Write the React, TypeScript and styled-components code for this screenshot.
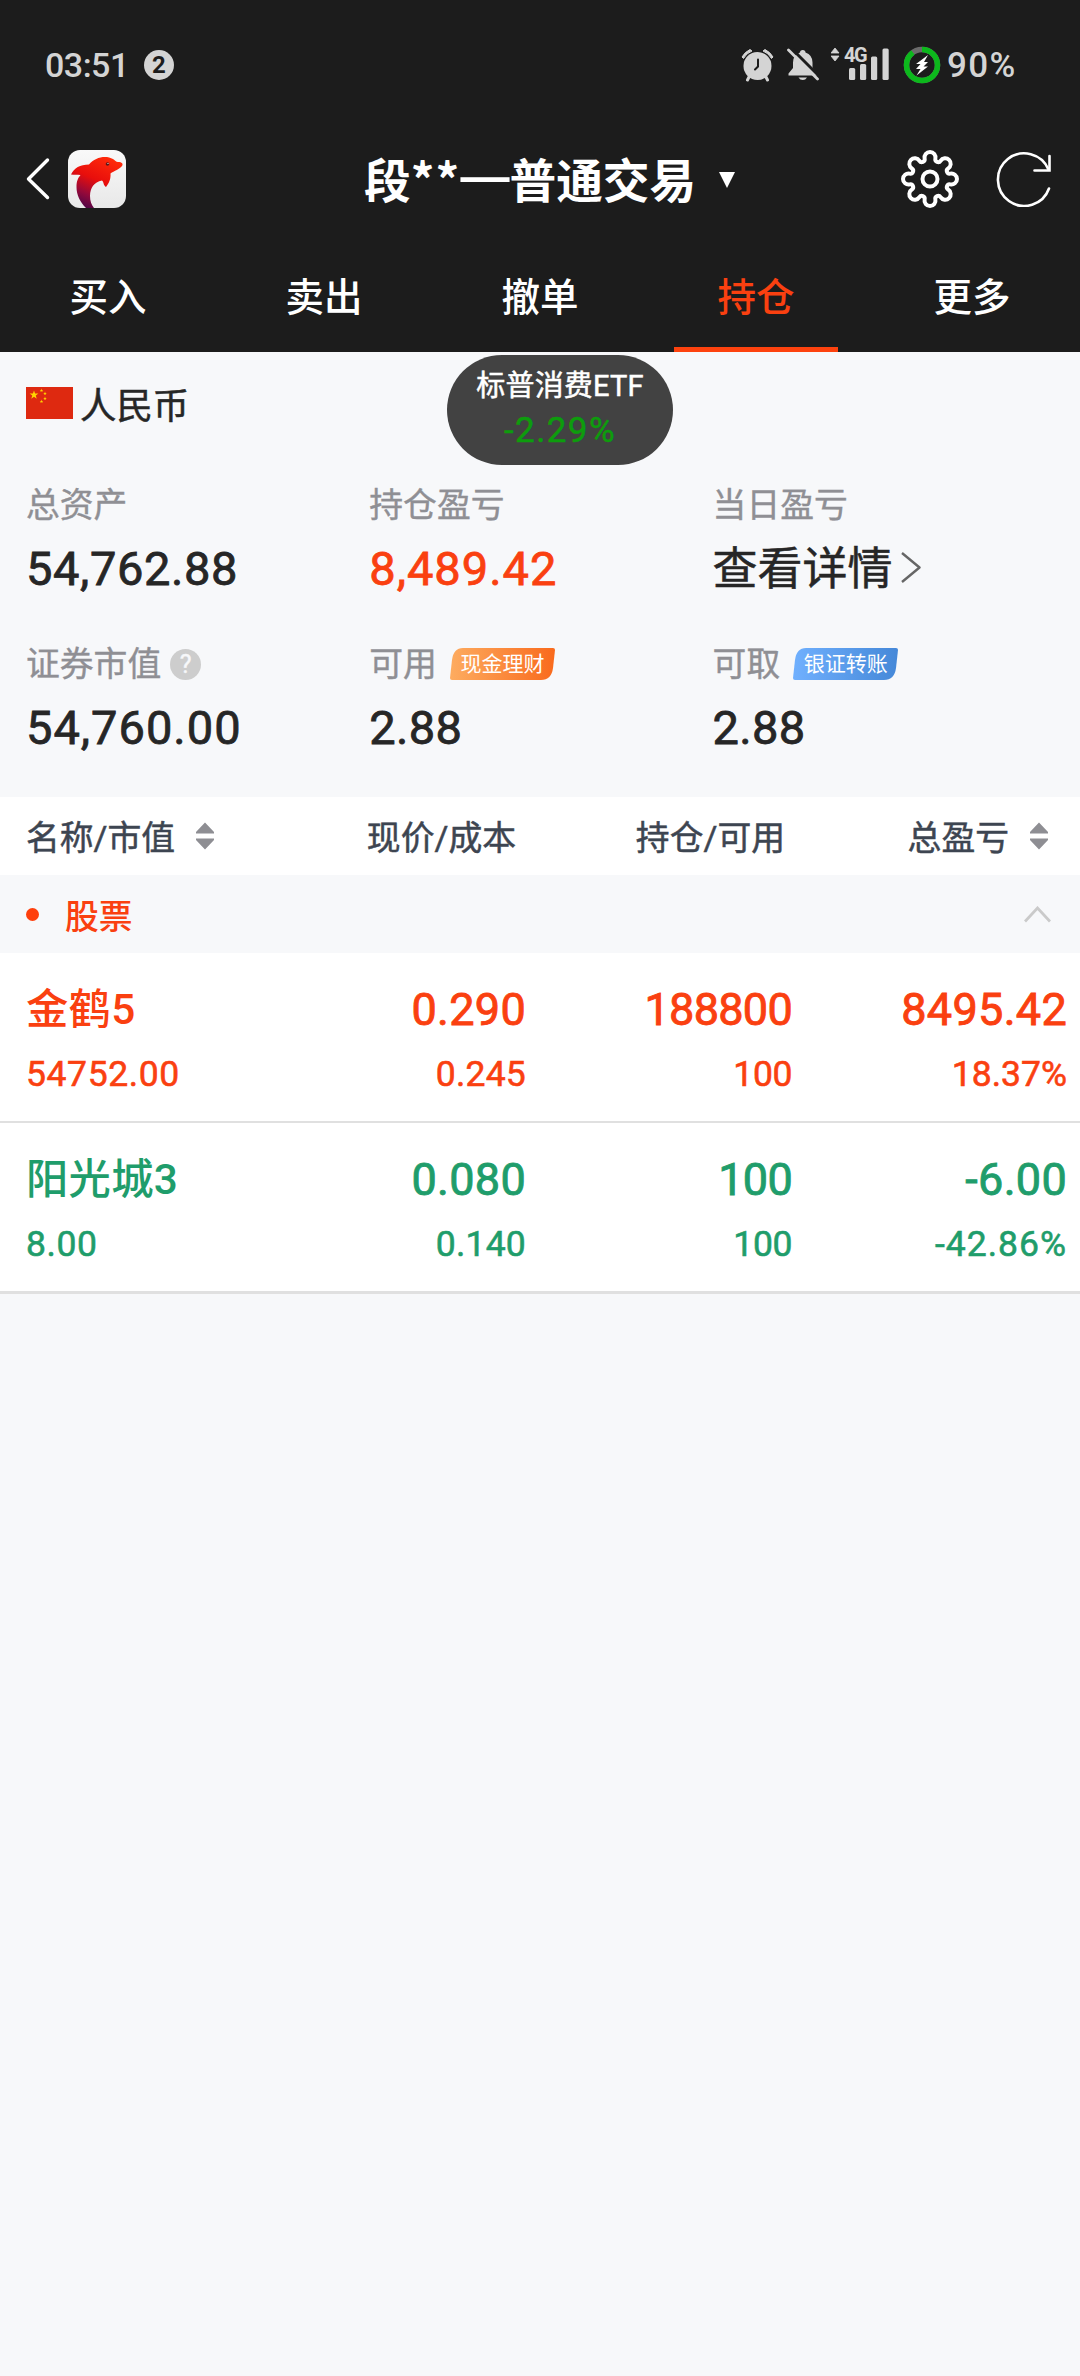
import React from "react";
import styled, { createGlobalStyle } from "styled-components";

const ORANGE = "#fa4010";
const GREEN = "#1f9d6b";

const GlobalStyle = createGlobalStyle`
  * { box-sizing: border-box; }
  html, body { margin: 0; padding: 0; background: #f7f8fa; }
  body { font-family: Roboto, "Noto Sans CJK SC", sans-serif; font-weight: 500; color: #262626; }
  svg { display: block; flex: none; }
`;

const Screen = styled.main`
  width: 1080px;
  height: 2376px;
  background: #f7f8fa;
  overflow: hidden;
`;

const TopArea = styled.header`
  height: 352px;
  background: #1c1c1c;
  color: #fff;
  display: flex;
  flex-direction: column;
`;

const StatusBar = styled.div`
  height: 130px;
  padding: 0 62px 0 45px;
  display: flex;
  align-items: center;
  color: #d4d4d4;
`;

const Clock = styled.span`
  font-size: 34px;
  line-height: 40px;
  letter-spacing: -0.5px;
  width: 99px;
`;

const Count = styled.span`
  width: 30px;
  height: 30px;
  border-radius: 50%;
  background: #d4d4d4;
  color: #1c1c1c;
  font-size: 24px;
  font-weight: 700;
  line-height: 31px;
  text-align: center;
`;

const StatusIcons = styled.div`
  margin-left: auto;
  display: flex;
  align-items: center;
`;

const Signal = styled.div`
  position: relative;
  width: 58px;
  height: 36px;
  margin-left: 12px;
`;

const NetType = styled.span`
  position: absolute;
  left: 13px;
  top: -2px;
  font-size: 20px;
  line-height: 20px;
  font-weight: 700;
  letter-spacing: -1.5px;
`;

const Battery = styled.span`
  margin-left: 6px;
  padding-top: 2px;
  font-size: 35px;
  line-height: 40px;
  width: 71px;
  letter-spacing: 1.4px;
`;

const TitleBar = styled.div`
  height: 98px;
  padding: 0 28px 0 25px;
  display: grid;
  grid-template-columns: 240px 1fr 240px;
  align-items: center;
`;

const BarSide = styled.div<{ $end?: boolean }>`
  display: flex;
  align-items: center;
  justify-content: ${(p) => (p.$end ? "flex-end" : "flex-start")};
  gap: ${(p) => (p.$end ? "37px" : "17px")};
`;

const Title = styled.h1`
  margin: -2px 0 0 99px;
  font-family: "Noto Sans CJK SC", sans-serif;
  font-size: 46.7px;
  line-height: 60px;
  font-weight: 700;
  display: flex;
  align-items: center;
  white-space: nowrap;
`;

const Stars = styled.span`
  letter-spacing: 1.2px;
`;

const Dash = styled.span`
  font-family: "Liberation Sans", sans-serif;
  font-size: 49px;
  line-height: 1;
  vertical-align: 5px;
`;

const Caret = styled.span`
  margin: 4px 0 0 23px;
  border: 8px solid transparent;
  border-top: 16px solid #fff;
  border-bottom: 0;
`;

const Tabs = styled.nav`
  flex: 1;
  display: grid;
  grid-template-columns: repeat(5, 1fr);
`;

const Tab = styled.div<{ $active?: boolean }>`
  display: flex;
  justify-content: center;
  padding-top: 40px;
  font-size: 38.5px;
  line-height: 60px;
  color: ${(p) => (p.$active ? ORANGE : "#fff")};
  span {
    width: 164px;
    text-align: center;
    border-bottom: ${(p) => (p.$active ? "5px solid #fd420e" : "0")};
  }
`;

const Summary = styled.section`
  position: relative;
  height: 445px;
  padding: 21px 26px 0;
`;

const Currency = styled.div`
  height: 60px;
  display: flex;
  align-items: center;
  gap: 7px;
  font-size: 36.4px;
  line-height: 60px;
  font-weight: 400;
  -webkit-text-stroke: 0.5px currentColor;
`;

const CurrencyName = styled.span`
  padding-top: 7px;
`;

const Ticker = styled.div`
  position: absolute;
  left: 447px;
  top: 3px;
  width: 226px;
  height: 110px;
  border-radius: 55px;
  background: #424242;
  color: #fff;
  text-align: center;
  padding-top: 8px;
`;

const TickerName = styled.div`
  font-size: 29px;
  line-height: 46px;
  font-weight: 400;
  -webkit-text-stroke: 0.5px currentColor;
  letter-spacing: 0.2px;
`;

const TickerChange = styled.div`
  font-size: 35px;
  line-height: 44px;
  color: #0d9c0d;
  font-weight: 400;
  letter-spacing: 1.4px;
  -webkit-text-stroke: 0.5px currentColor;
`;

const Metrics = styled.div`
  display: grid;
  grid-template-columns: repeat(3, 343.3px);
  grid-auto-rows: 159px;
  padding-top: 42px;
`;

const MetricLabel = styled.div`
  height: 60px;
  display: flex;
  align-items: center;
  font-size: 33.8px;
  color: #8f8f94;
  font-weight: 400;
  -webkit-text-stroke: 0.4px currentColor;
`;

const LabelText = styled.span`
  padding-bottom: 5px;
`;

const MetricValue = styled.div<{ $color?: string; $cjk?: boolean; $track?: number }>`
  height: 60px;
  margin-top: 4px;
  padding-bottom: ${(p) => (p.$cjk ? 0 : 2)}px;
  display: flex;
  align-items: center;
  font-size: ${(p) => (p.$cjk ? "45px" : "47px")};
  letter-spacing: ${(p) => p.$track || 0}px;
  color: ${(p) => p.$color || "#262626"};
  font-weight: 400;
  -webkit-text-stroke: ${(p) => (p.$cjk ? 0.5 : 0.8)}px currentColor;
`;

const ValueText = styled.span`
  padding-bottom: 8px;
`;

const BadgeBox = styled.span`
  position: relative;
  width: 105px;
  height: 32px;
  margin-left: 13px;
`;

const BadgeText = styled.span`
  position: absolute;
  inset: 0;
  font-size: 21px;
  line-height: 33px;
  text-align: center;
  color: #fff;
  -webkit-text-stroke: 0;
`;

const Help = styled.span`
  width: 31px;
  height: 31px;
  margin-left: 9px;
  border-radius: 50%;
  background: #cdcdcd;
  color: #f7f8fa;
  font-size: 25px;
  line-height: 32px;
  text-align: center;
`;

const columns = "grid-template-columns: 260px 266px 266px 275px;";

const TableHead = styled.div`
  height: 78px;
  background: #fff;
  display: grid;
  ${columns}
  align-items: center;
  font-size: 33.8px;
  line-height: 60px;
  color: #3d4551;
  font-weight: 400;
  -webkit-text-stroke: 0.5px currentColor;
`;

const HeadCell = styled.div<{ $first?: boolean; $right?: number }>`
  display: flex;
  align-items: center;
  gap: 21px;
  white-space: nowrap;
  justify-content: ${(p) => (p.$first ? "flex-start" : "flex-end")};
  padding-left: ${(p) => (p.$first ? "26px" : "0")};
  padding-right: ${(p) => p.$right || 0}px;
`;

const HeadText = styled.span`
  padding-top: 5px;
`;

const Group = styled.div`
  height: 78px;
  padding: 0 29px 0 26px;
  display: flex;
  align-items: center;
  font-size: 33.8px;
  color: ${ORANGE};
`;

const Dot = styled.span`
  width: 13px;
  height: 13px;
  border-radius: 50%;
  background: #fe3f0c;
  margin-right: 26px;
`;

const Spacer = styled.span`
  flex: 1;
`;

const Row = styled.div<{ $color: string; $last?: boolean }>`
  height: ${(p) => (p.$last ? 171 : 170)}px;
  padding-top: 26px;
  background: #fff;
  border-bottom: ${(p) => (p.$last ? 3 : 2)}px solid #e0e0e0;
  color: ${(p) => p.$color};
  display: grid;
  ${columns}
`;

const Cell = styled.div<{ $first?: boolean }>`
  text-align: ${(p) => (p.$first ? "left" : "right")};
  padding-left: ${(p) => (p.$first ? "26px" : "0")};
  white-space: nowrap;
`;

const Main = styled.div<{ $name?: boolean; $tight?: boolean }>`
  font-size: ${(p) => (p.$name ? "42.3px" : "45px")};
  line-height: 62px;
  font-weight: ${(p) => (p.$name ? 500 : 400)};
  letter-spacing: ${(p) => (p.$tight ? -0.7 : 0.3)}px;
  -webkit-text-stroke: ${(p) => (p.$name ? "0" : "0.9px currentColor")};
`;

const Sub = styled.div<{ $track?: number }>`
  font-size: 35.5px;
  line-height: 60px;
  margin-top: 3px;
  font-weight: 400;
  letter-spacing: ${(p) => p.$track ?? 0.2}px;
  -webkit-text-stroke: 0.6px currentColor;
`;

const AlarmIcon = () => (
  <svg width="33" height="34" viewBox="0 0 33 34" fill="#d4d4d4">
    <path d="M1 9 A18 18 0 0 1 9 1.5 L11 3 A16 16 0 0 0 2.5 10.5 Z" stroke="#d4d4d4" strokeWidth="1" strokeLinejoin="round" />
    <path d="M32 9 A18 18 0 0 0 24 1.5 L22 3 A16 16 0 0 1 30.5 10.5 Z" stroke="#d4d4d4" strokeWidth="1" strokeLinejoin="round" />
    <circle cx="16.5" cy="18" r="14" />
    <path d="M8 29 L6.5 32 M25 29 L26.5 32" stroke="#d4d4d4" strokeWidth="3" strokeLinecap="round" />
    <path d="M17 11.5 V18.5 L14 21.5" fill="none" stroke="#1c1c1c" strokeWidth="2" strokeLinecap="round" />
  </svg>
);

const MutedBellIcon = () => (
  <svg width="32" height="34" viewBox="0 0 32 34" style={{ marginLeft: 13 }}>
    <path d="M13 4.5 Q13 2 15.8 2 Q18.5 2 18.5 4.5 Q25.5 7 25.5 14.5 V20 L30 25.5 V27.5 H1.5 V25.5 L6 20 V14.5 Q6 7 13 4.5Z" fill="#d4d4d4" />
    <path d="M11.5 29.5 H20 Q18.5 32 15.8 32 Q13 32 11.5 29.5Z" fill="#d4d4d4" />
    <path d="M4 0 L33 29" stroke="#1c1c1c" strokeWidth="3" />
    <path d="M1.5 2 L30.5 31" stroke="#d4d4d4" strokeWidth="2.8" strokeLinecap="round" />
  </svg>
);

const SignalIcon = () => (
  <svg width="58" height="36" viewBox="0 0 58 36" fill="#d4d4d4">
    <path d="M0 6 L4 1 L8 6Z M0 9 L4 14 L8 9Z" stroke="#d4d4d4" strokeWidth="0.8" strokeLinejoin="round" />
    <rect x="18" y="21" width="6.2" height="12" rx="1.5" />
    <rect x="29" y="17" width="6.2" height="16" rx="1.5" />
    <rect x="40" y="9.5" width="6.2" height="23.5" rx="1.5" />
    <rect x="51.5" y="1.5" width="6.2" height="31.5" rx="1.5" />
  </svg>
);

const ChargeIcon = () => (
  <svg width="38" height="38" viewBox="0 0 38 38" style={{ marginLeft: 14 }}>
    <circle cx="19" cy="19" r="15.5" fill="none" stroke="#6b6b6b" strokeWidth="5.5" />
    <circle cx="19" cy="19" r="15.5" fill="none" stroke="#0cb81c" strokeWidth="5.5" pathLength="100" strokeDasharray="90 10" transform="rotate(-90 19 19)" />
    <path d="M25 9 L13 18 H17.5 L13 23 H17.5 L13.5 29.5 L25 20.5 H20.5 L25 16 H21Z" fill="#fff" />
  </svg>
);

const BackIcon = () => (
  <svg width="26" height="44" viewBox="0 0 26 44" fill="none" stroke="#fff" strokeWidth="3.4" strokeLinecap="round" strokeLinejoin="round">
    <path d="M22.5 3 L3.5 22 L22.5 40.5" />
  </svg>
);

const DolphinLogo = () => (
  <svg width="58" height="58" viewBox="0 0 58 58">
    <defs>
      <linearGradient id="dolphin" x1="0.7" y1="0" x2="0.25" y2="1">
        <stop offset="0" stopColor="#ff2a0a" />
        <stop offset="0.45" stopColor="#e80e0c" />
        <stop offset="0.75" stopColor="#94093a" />
        <stop offset="1" stopColor="#4c0648" />
      </linearGradient>
      <linearGradient id="tile" x1="0" y1="0" x2="0" y2="1">
        <stop offset="0" stopColor="#f9f9f9" />
        <stop offset="1" stopColor="#e8e8e8" />
      </linearGradient>
    </defs>
    <rect width="58" height="58" rx="12" fill="url(#tile)" />
    <path d="M3 24.5 C6 18 12 14.5 21 14.5 C27 7 38 5 45 9 C47 10.5 48 12 50 12 C54 12 55.5 14 54 16 C52 19 46 21 42.5 23.5 C43 29 41 33 38 37 C35 35 36 32 34 30.5 C26 32 22 38 22 46 C22 51 23.5 55 26 58 H18 C12 52 8.5 45 8.5 37 C8.5 31 10 28 12.5 25 C9 24.5 6 25 3 24.5Z" fill="url(#dolphin)" />
    <circle cx="39.5" cy="14" r="1.8" fill="#5c1a1a" />
    <circle cx="40" cy="13.5" r="0.6" fill="#fff" />
  </svg>
);

/* Eight round teeth joined by small round valleys; each pair of arcs is tangent. */
const gearPath = (() => {
  const c = 29;
  const toothR = 5.5;
  const toothAt = 21.5;
  const valleyAt = 21.3;
  const half = Math.PI / 8;
  const polar = (r: number, a: number) => [c + r * Math.sin(a), c - r * Math.cos(a)];
  const gap = Math.hypot(
    valleyAt * Math.sin(half),
    toothAt - valleyAt * Math.cos(half)
  );
  const valleyR = gap - toothR;
  const touch = (tooth: number, valley: number) => {
    const [tx, ty] = polar(toothAt, tooth);
    const [vx, vy] = polar(valleyAt, valley);
    const k = toothR / gap;
    return `${(tx + (vx - tx) * k).toFixed(2)} ${(ty + (vy - ty) * k).toFixed(2)}`;
  };
  let d = `M${touch(0, -half)}`;
  for (let i = 0; i < 8; i++) {
    const a = i * half * 2;
    d += `A${toothR} ${toothR} 0 1 1 ${touch(a, a + half)}`;
    d += `A${valleyR} ${valleyR} 0 0 0 ${touch(a + half * 2, a + half)}`;
  }
  return d + "Z";
})();

const GearIcon = () => (
  <svg width="58" height="58" viewBox="0 0 58 58" fill="none" stroke="#fff" strokeWidth="4" strokeLinejoin="round">
    <path d={gearPath} />
    <circle cx="29" cy="29" r="7.5" />
  </svg>
);

const RefreshIcon = () => (
  <svg width="56" height="56" viewBox="0 0 56 56" fill="none" stroke="#fff" strokeWidth="2.6">
    <path d="M53 37.500 A26.3 26.3 0 1 1 52.500 18.5" strokeLinecap="round" />
    <path d="M53.5 5 V19.5 H38.5" strokeLinecap="round" />
  </svg>
);

const star = (cx: number, cy: number, r: number) =>
  Array.from({ length: 10 }, (_, i) => {
    const a = (i * Math.PI) / 5;
    const q = i % 2 ? r * 0.4 : r;
    return `${cx + q * Math.sin(a)},${cy - q * Math.cos(a)}`;
  }).join(" ");

const Flag = () => (
  <svg width="47" height="32" viewBox="0 0 47 32">
    <rect width="47" height="32" fill="#de2910" />
    <g fill="#ffd500">
      <polygon points={star(8, 8, 4.6)} />
      <polygon points={star(15.5, 3.5, 1.9)} />
      <polygon points={star(19, 6.5, 1.9)} />
      <polygon points={star(19, 11.5, 1.9)} />
      <polygon points={star(15.5, 14.5, 1.9)} />
    </g>
  </svg>
);

const Badge = ({ id, from, to, children }: { id: string; from: string; to: string; children: string }) => (
  <BadgeBox>
    <svg width="105" height="32" viewBox="0 0 105 32">
      <defs>
        <linearGradient id={id}>
          <stop offset="0" stopColor={from} />
          <stop offset="1" stopColor={to} />
        </linearGradient>
      </defs>
      <path d="M13 0 H103 Q105 0 105 2 L103 20 Q101.5 32 91 32 H2 Q0 32 0 30 L2 12 Q3.5 0 13 0Z" fill={`url(#${id})`} />
    </svg>
    <BadgeText>{children}</BadgeText>
  </BadgeBox>
);

const DetailChevron = () => (
  <svg width="20" height="31" viewBox="0 0 20 31" fill="none" stroke="#666" strokeWidth="2.4" strokeLinejoin="round" style={{ marginLeft: 8, marginBottom: 4 }}>
    <path d="M1 1 L18.5 15.5 L1 30" />
  </svg>
);

const SortIcon = () => (
  <svg width="18" height="28" viewBox="0 0 18 28" fill="#8e8e93">
    <path d="M9 0.5 L18 10 V11.5 H0 V10Z M9 27.5 L18 18 V16.5 H0 V18Z" />
  </svg>
);

const CollapseIcon = () => (
  <svg width="27" height="17" viewBox="0 0 27 17" fill="none" stroke="#cacaca" strokeWidth="2.8">
    <path d="M1 15.5 L13.5 2 L26 15.5" />
  </svg>
);

const holdings = [
  { name: "金鹤5", value: "54752.00", price: "0.290", cost: "0.245", held: "188800", free: "100", profit: "8495.42", rate: "18.37%", color: ORANGE },
  { name: "阳光城3", value: "8.00", price: "0.080", cost: "0.140", held: "100", free: "100", profit: "-6.00", rate: "-42.86%", color: GREEN },
];

export default function App() {
  return (
    <Screen>
      <GlobalStyle />
      <TopArea>
        <StatusBar>
          <Clock>03:51</Clock>
          <Count>2</Count>
          <StatusIcons>
            <AlarmIcon />
            <MutedBellIcon />
            <Signal>
              <SignalIcon />
              <NetType>4G</NetType>
            </Signal>
            <ChargeIcon />
            <Battery>90%</Battery>
          </StatusIcons>
        </StatusBar>
        <TitleBar>
          <BarSide>
            <BackIcon />
            <DolphinLogo />
          </BarSide>
          <Title>
            <span>
              段<Stars>**</Stars>
              <Dash>—</Dash>普通交易
            </span>
            <Caret />
          </Title>
          <BarSide $end>
            <GearIcon />
            <RefreshIcon />
          </BarSide>
        </TitleBar>
        <Tabs>
          {["买入", "卖出", "撤单", "持仓", "更多"].map((t) => (
            <Tab key={t} $active={t === "持仓"}>
              <span>{t}</span>
            </Tab>
          ))}
        </Tabs>
      </TopArea>
      <Summary>
        <Currency>
          <Flag />
          <CurrencyName>人民币</CurrencyName>
        </Currency>
        <Metrics>
          <div>
            <MetricLabel>
              <LabelText>总资产</LabelText>
            </MetricLabel>
            <MetricValue $track={0.6}>54,762.88</MetricValue>
          </div>
          <div>
            <MetricLabel>
              <LabelText>持仓盈亏</LabelText>
            </MetricLabel>
            <MetricValue $color={ORANGE} $track={1}>8,489.42</MetricValue>
          </div>
          <div>
            <MetricLabel>
              <LabelText>当日盈亏</LabelText>
            </MetricLabel>
            <MetricValue $cjk>
              <ValueText>查看详情</ValueText>
              <DetailChevron />
            </MetricValue>
          </div>
          <div>
            <MetricLabel>
              <LabelText>证券市值</LabelText>
              <Help>?</Help>
            </MetricLabel>
            <MetricValue $track={1}>54,760.00</MetricValue>
          </div>
          <div>
            <MetricLabel>
              <LabelText>可用</LabelText>
              <Badge id="cash" from="#fdac60" to="#f96a1c">现金理财</Badge>
            </MetricLabel>
            <MetricValue $track={0.3}>2.88</MetricValue>
          </div>
          <div>
            <MetricLabel>
              <LabelText>可取</LabelText>
              <Badge id="bank" from="#70b0fe" to="#4588d8">银证转账</Badge>
            </MetricLabel>
            <MetricValue $track={0.3}>2.88</MetricValue>
          </div>
        </Metrics>
        <Ticker>
          <TickerName>标普消费ETF</TickerName>
          <TickerChange>-2.29%</TickerChange>
        </Ticker>
      </Summary>
      <TableHead>
        <HeadCell $first>
          <HeadText>名称/市值</HeadText>
          <SortIcon />
        </HeadCell>
        <HeadCell $right={10}>
          <HeadText>现价/成本</HeadText>
        </HeadCell>
        <HeadCell $right={7}>
          <HeadText>持仓/可用</HeadText>
        </HeadCell>
        <HeadCell $right={19}>
          <HeadText>总盈亏</HeadText>
          <SortIcon />
        </HeadCell>
      </TableHead>
      <Group>
        <Dot />
        股票
        <Spacer />
        <CollapseIcon />
      </Group>
      {holdings.map((h, i) => (
        <Row key={h.name} $color={h.color} $last={i === holdings.length - 1}>
          <Cell $first>
            <Main $name>{h.name}</Main>
            <Sub $track={0.6}>{h.value}</Sub>
          </Cell>
          <Cell>
            <Main>{h.price}</Main>
            <Sub>{h.cost}</Sub>
          </Cell>
          <Cell>
            <Main $tight>{h.held}</Main>
            <Sub $track={-0.4}>{h.free}</Sub>
          </Cell>
          <Cell>
            <Main>{h.profit}</Main>
            <Sub $track={h.rate.startsWith("-") ? 1 : 0}>{h.rate}</Sub>
          </Cell>
        </Row>
      ))}
    </Screen>
  );
}
